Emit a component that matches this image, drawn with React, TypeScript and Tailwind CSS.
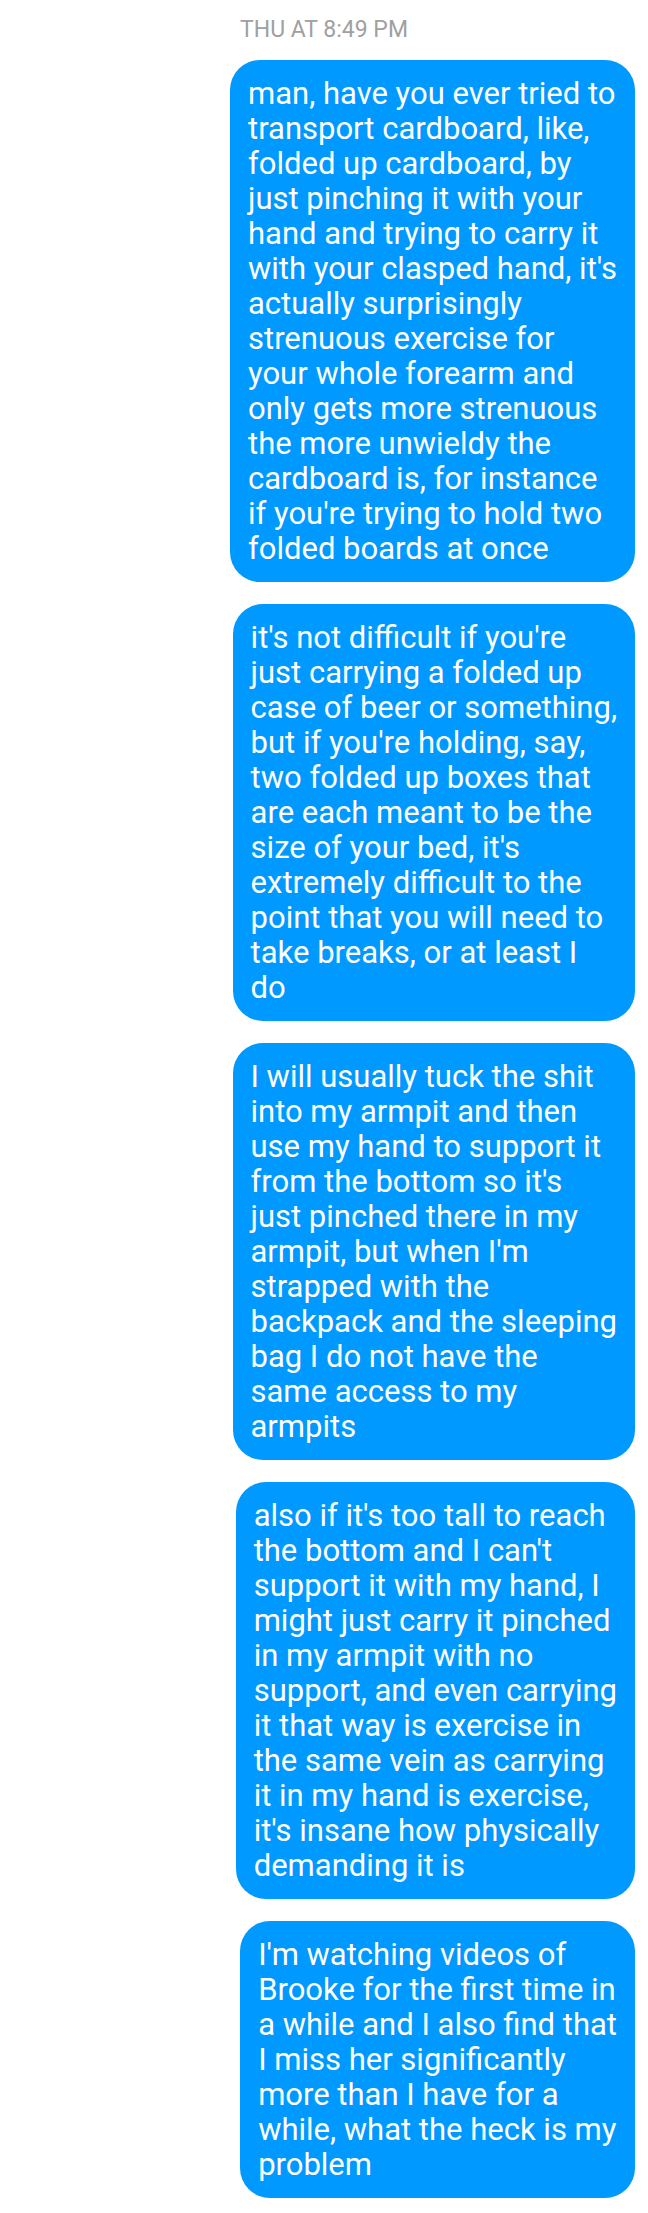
const messages: string[] = [
  `man, have you ever tried to
transport cardboard, like,
folded up cardboard, by
just pinching it with your
hand and trying to carry it
with your clasped hand, it's
actually surprisingly
strenuous exercise for
your whole forearm and
only gets more strenuous
the more unwieldy the
cardboard is, for instance
if you're trying to hold two
folded boards at once`,
  `it's not difficult if you're
just carrying a folded up
case of beer or something,
but if you're holding, say,
two folded up boxes that
are each meant to be the
size of your bed, it's
extremely difficult to the
point that you will need to
take breaks, or at least I
do`,
  `I will usually tuck the shit
into my armpit and then
use my hand to support it
from the bottom so it's
just pinched there in my
armpit, but when I'm
strapped with the
backpack and the sleeping
bag I do not have the
same access to my
armpits`,
  `also if it's too tall to reach
the bottom and I can't
support it with my hand, I
might just carry it pinched
in my armpit with no
support, and even carrying
it that way is exercise in
the same vein as carrying
it in my hand is exercise,
it's insane how physically
demanding it is`,
  `I'm watching videos of
Brooke for the first time in
a while and I also find that
I miss her significantly
more than I have for a
while, what the heck is my
problem`,
];

function Bubble({ text }: { text: string }) {
  return (
    <li className="w-fit whitespace-pre-line rounded-[30px] bg-[#0099ff] px-[18px] py-4 text-[31px] leading-[35px] text-white">
      {text}
    </li>
  );
}

export default function App() {
  return (
    <main className="min-h-screen bg-white px-[13px] pt-3.5 pb-4 font-['Roboto',sans-serif]">
      <time className="block text-center text-[23px] leading-8 text-[#a0a0a0]">THU AT 8:49 PM</time>
      <ul className="mt-3.5 flex flex-col items-end gap-[22px]">
        {messages.map((text) => (
          <Bubble key={text} text={text} />
        ))}
      </ul>
    </main>
  );
}
